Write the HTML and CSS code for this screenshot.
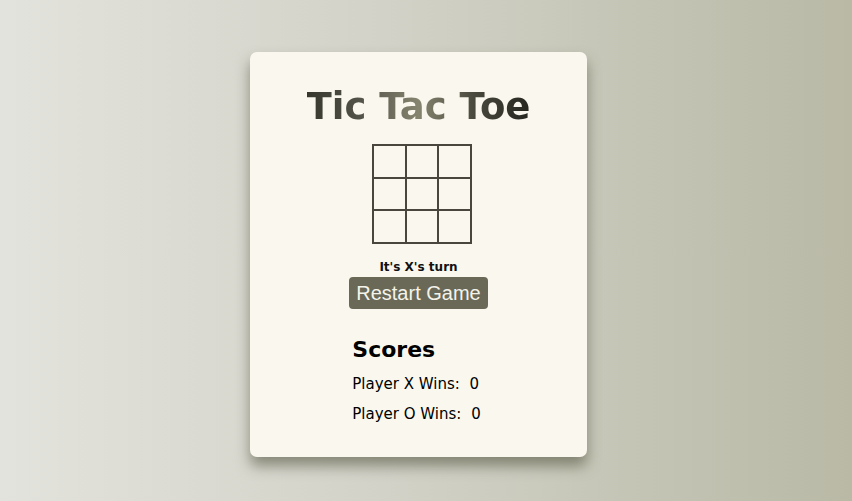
FILE: index.html
```html
<!DOCTYPE html>
<html lang="en">
<head>
<meta charset="utf-8">
<title>Tic Tac Toe</title>
<link rel="stylesheet" href="styles.css">
</head>
<body>
  <main class="card">
    <h1 class="title">Tic Tac Toe</h1>
    <div class="board">
      <div class="cell"></div><div class="cell"></div><div class="cell"></div>
      <div class="cell"></div><div class="cell"></div><div class="cell"></div>
      <div class="cell"></div><div class="cell"></div><div class="cell"></div>
    </div>
    <p class="status">It's X's turn</p>
    <button class="restart">Restart Game</button>
    <section class="scores">
      <h2 class="scores-title">Scores</h2>
      <p class="score-line">Player X Wins: <span class="score-num">0</span></p>
      <p class="score-line">Player O Wins: <span class="score-num">0</span></p>
    </section>
  </main>
</body>
</html>
```
FILE: styles.css
```css
html, body {
  margin: 0;
  height: 100%;
}
body {
  background: linear-gradient(90deg, #e3e3dd 0%, #d2d2c8 45%, #b9b9a6 100%);
  font-family: "Comic Sans MS", "DejaVu Sans", sans-serif;
  box-sizing: border-box;
  padding: 52px 0 0 250px;
}
.card {
  width: 337px;
  height: 405px;
  box-sizing: border-box;
  background: #faf8ee;
  border-radius: 7px;
  box-shadow: 0 9px 14px rgba(85, 85, 65, 0.6);
  display: flex;
  flex-direction: column;
  align-items: center;
  padding-top: 30px;
}
.title {
  margin: 0;
  font-size: 37px;
  line-height: 50px;
  font-weight: bold;
  background: linear-gradient(90deg, #38372e 0%, #55544a 25%, #85846f 50%, #4a493e 75%, #27261f 100%);
  -webkit-background-clip: text;
  background-clip: text;
  color: transparent;
}
.board {
  margin: 12px 0 0 7px;
  width: 100px;
  height: 100px;
  box-sizing: border-box;
  border: 1px solid #48463d;
  display: grid;
  grid-template-columns: repeat(3, 1fr);
  grid-template-rows: repeat(3, 1fr);
}
.cell {
  border: 1px solid #48463d;
}
.status {
  margin: 15px 0 0;
  font-size: 12px;
  line-height: 16px;
  font-weight: bold;
  color: #111;
}
.restart {
  margin-top: 2px;
  font-family: "Liberation Sans", Arial, sans-serif;
  font-size: 20px;
  line-height: 24px;
  padding: 4px 7px;
  border: none;
  border-radius: 4px;
  background: #6a6957;
  color: #f4f3ea;
}
.scores {
  margin-top: 26px;
  padding-right: 4px;
  align-self: center;
  text-align: left;
}
.scores-title {
  margin: 0 0 9px;
  font-size: 22px;
  line-height: 30px;
  font-weight: bold;
  color: #000;
}
.score-line {
  margin: 0 0 10px;
  font-size: 15px;
  line-height: 20px;
  color: #000;
}
.score-num {
  margin-left: 5px;
}
```
